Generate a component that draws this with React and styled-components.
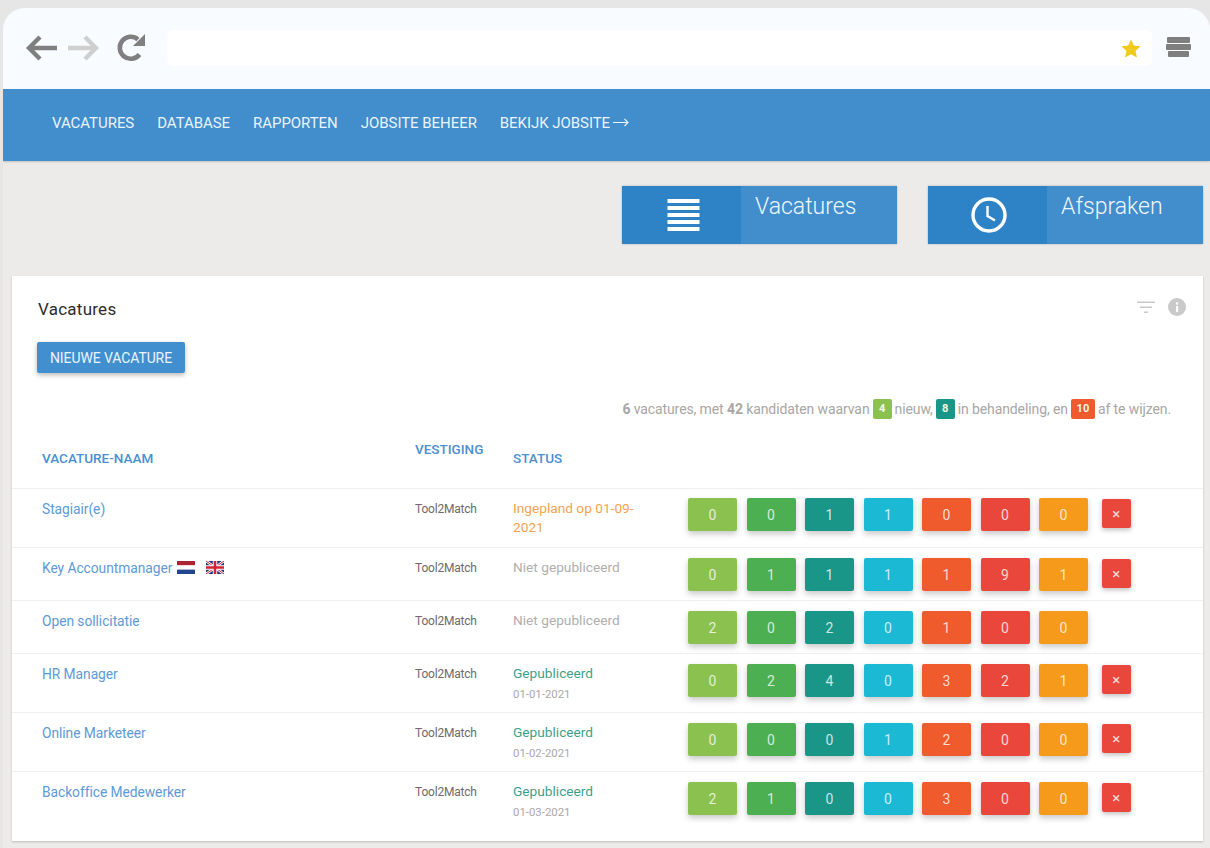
import React from "react";
import styled, { createGlobalStyle } from "styled-components";

const Global = createGlobalStyle`
  html, body { margin: 0; padding: 0; background: #e6e6e6; }
  body { font-family: Roboto, "Liberation Sans", sans-serif; overflow: hidden; }
  * { box-sizing: border-box; }
`;

const Page = styled.div`
  width: 1210px;
  height: 848px;
  padding: 8px 0 0 3px;
  overflow: hidden;
`;
const Frame = styled.div`
  height: 840px;
  background: #ecebe9;
  border-radius: 22px 22px 0 0;
  overflow: hidden;
`;
const Chrome = styled.div`
  height: 81px;
  background: #f8fbff;
  display: flex;
  align-items: center;
  padding: 0 19px 1px 23px;
`;
const NavButtons = styled.div`
  display: flex;
  align-items: center;
  gap: 9px;
  width: 141px;
  flex: none;
`;
const ReloadWrap = styled.span`
  display: flex;
  margin: -2px 0 0 8px;
`;
const UrlBar = styled.div`
  flex: 1;
  height: 36px;
  background: #fff;
  border-radius: 6px;
  display: flex;
  align-items: center;
  justify-content: flex-end;
  padding-right: 11px;
`;
const Burger = styled.div`
  width: 25px;
  margin: 0 0 2px 14px;
  display: flex;
  flex-direction: column;
  align-items: center;
  gap: 1px;
`;
const BurgerBar = styled.span`
  display: block;
  height: 6px;
  width: ${(p) => p.$w}px;
  background: #7f7f7f;
  border-radius: 1px;
`;
const Nav = styled.nav`
  height: 72px;
  background: #428dcc;
  display: flex;
  align-items: center;
  gap: 23px;
  padding: 0 0 5px 49px;
  box-shadow: 0 1px 2px rgba(0, 0, 0, 0.18);
`;
const NavItem = styled.span`
  display: inline-flex;
  align-items: center;
  gap: 3px;
  color: #e9f4fe;
  font-size: 15px;
  letter-spacing: -0.05px;
  text-transform: uppercase;
`;
const StatRow = styled.div`
  display: flex;
  justify-content: flex-end;
  gap: 31px;
  padding: 25px 7px 0 0;
`;
const Stat = styled.div`
  width: 275px;
  height: 58px;
  display: flex;
  background: #428dcc;
  box-shadow: 0 0 2px rgba(0, 0, 0, 0.25);
`;
const StatIcon = styled.div`
  width: 119px;
  padding-left: 3px;
  background: #2e83c6;
  display: flex;
  align-items: center;
  justify-content: center;
`;
const StatLabel = styled.div`
  padding: 6px 0 0 14px;
  color: #eef6fd;
  font-size: 23px;
  font-weight: 300;
  line-height: 30px;
`;
const Card = styled.section`
  margin: 32px 7px 0 9px;
  height: 565px;
  background: #fff;
  box-shadow: 0 1px 2px rgba(0, 0, 0, 0.2);
`;
const CardHead = styled.div`
  display: flex;
  justify-content: space-between;
  align-items: center;
  height: 66px;
  padding: 0 17px 0 26px;
`;
const CardTitle = styled.h2`
  margin: 0;
  font-size: 17px;
  font-weight: 400;
  letter-spacing: 0.25px;
  color: #2c2c2c;
`;
const HeadTools = styled.div`
  display: flex;
  align-items: center;
  gap: 13px;
  margin-top: -4px;
`;
const NewButton = styled.button`
  display: block;
  margin-left: 25px;
  width: 148px;
  height: 31px;
  border: 0;
  padding: 0;
  border-radius: 2px;
  background: #428fd0;
  color: #e9f4fe;
  font-family: inherit;
  font-size: 14px;
  letter-spacing: -0.1px;
  text-transform: uppercase;
  box-shadow: 0 2px 5px rgba(0, 0, 0, 0.28);
`;
const Summary = styled.p`
  margin: 26px 32px 0 0;
  height: 20px;
  line-height: 20px;
  text-align: right;
  font-size: 14px;
  letter-spacing: -0.1px;
  color: #a9a6a4;
  white-space: nowrap;
`;
const SummaryBadge = styled.span`
  display: inline-block;
  width: ${(p) => p.$w}px;
  height: 20px;
  line-height: 20px;
  text-align: center;
  margin: 0 3px;
  letter-spacing: 0;
  vertical-align: top;
  border-radius: 2px;
  background: ${(p) => p.$bg};
  color: #f2f7ea;
  font-size: 11px;
  font-weight: 700;
`;
const HeaderRow = styled.div`
  display: grid;
  grid-template-columns: 373px 98px 1fr;
  height: 69px;
  padding-left: 30px;
  color: #4a90d2;
  font-size: 13.5px;
  font-weight: 500;
  text-transform: uppercase;
`;
const HeadCell = styled.div`
  padding-top: ${(p) => p.$top}px;
  line-height: 16px;
`;
const Row = styled.div`
  display: grid;
  grid-template-columns: 373px 98px 175px 1fr;
  height: ${(p) => p.$h}px;
  padding: 11px 0 0 30px;
  border-top: 1px solid #efefef;
`;
const NameCell = styled.div`
  display: flex;
  align-items: flex-start;
  gap: 3px;
  color: #5d9ad8;
  font-size: 13.8px;
  letter-spacing: -0.05px;
  line-height: 18px;
`;
const Flag = styled.svg`
  width: 18px;
  height: 13px;
  margin: 2px 6px 0 2px;
`;
const Branch = styled.div`
  color: #6e6a68;
  font-size: 12px;
  letter-spacing: -0.2px;
  line-height: 18px;
`;
const StatusCell = styled.div`
  margin-top: -1px;
  font-size: 13.7px;
  line-height: 19px;
  white-space: pre-line;
  color: ${(p) => p.$color};
`;
const StatusDate = styled.div`
  margin-top: 2px;
  font-size: 11.4px;
  line-height: 18px;
  color: #aaa8a7;
`;
const Counts = styled.div`
  display: flex;
  align-items: flex-start;
  gap: 9.5px;
  margin-top: ${(p) => (p.$first ? -2 : -1)}px;
`;
const Count = styled.div`
  width: 49px;
  height: 33px;
  display: flex;
  align-items: center;
  justify-content: center;
  border-radius: 2px;
  background: ${(p) => p.$bg};
  color: rgba(255, 255, 255, 0.78);
  font-size: 14px;
  box-shadow: 0 3px 6px rgba(0, 0, 0, 0.22);
`;
const Remove = styled.button`
  width: 28.5px;
  height: 29px;
  margin: 1px 0 0 4.5px;
  border: 0;
  padding: 0;
  display: flex;
  align-items: center;
  justify-content: center;
  border-radius: 2px;
  background: #e9473b;
  color: #f6dcda;
  font-family: inherit;
  font-size: 15px;
  box-shadow: 0 2px 5px rgba(0, 0, 0, 0.25);
`;

const Arrow = ({ flip, color }) => (
  <svg width="32" height="28" viewBox="0 0 32 28" style={flip ? { transform: "scaleX(-1)" } : undefined}>
    <path d="M14 3 L3 14 L14 25 M3 14 H31" fill="none" stroke={color} strokeWidth="4.4" />
  </svg>
);
const LinkArrow = () => (
  <svg width="16" height="9" viewBox="0 0 16 9">
    <path d="M0 4.5 H15 M11.5 1 L15 4.5 L11.5 8" fill="none" stroke="#e9f4fe" strokeWidth="1.1" />
  </svg>
);
const Reload = () => (
  <svg width="30" height="30" viewBox="0 0 30 30">
    <path d="M23.5 22.5 A11 11 0 1 1 22 7.5" fill="none" stroke="#7f7f7f" strokeWidth="4.6" />
    <path d="M29 2 V14 H17 Z" fill="#7f7f7f" />
  </svg>
);
const Star = () => (
  <svg width="20" height="19" viewBox="0 0 24 23">
    <path d="M12 0.5 L15.4 8 L23.5 8.9 L17.5 14.4 L19.2 22.5 L12 18.4 L4.8 22.5 L6.5 14.4 L0.5 8.9 L8.6 8 Z" fill="#f0c91f" />
  </svg>
);
const ListIcon = () => (
  <svg width="33" height="34" viewBox="0 0 33 34">
    {[0, 7, 14, 21, 28].map((y) => (
      <rect key={y} x="0.5" y={y + 1} width="32" height="4" fill="#fff" />
    ))}
  </svg>
);
const ClockIcon = () => (
  <svg width="38" height="38" viewBox="0 0 38 38">
    <circle cx="19" cy="19" r="16" fill="none" stroke="#fff" strokeWidth="3.4" />
    <path d="M17.5 10 V20 L25 24.5" fill="none" stroke="#fff" strokeWidth="2.4" />
  </svg>
);
const FilterIcon = () => (
  <svg width="18" height="13" viewBox="0 0 18 13">
    <path d="M0 0.5 H18 V2 H0 Z M3 5.5 H15 V7 H3 Z M7 10.5 H11 V12 H7 Z" fill="#c9c9c9" />
  </svg>
);
const InfoIcon = () => (
  <svg width="18" height="18" viewBox="0 0 18 18">
    <circle cx="9" cy="9" r="9" fill="#c9c9c9" />
    <rect x="8" y="8" width="2.2" height="6" fill="#fff" />
    <rect x="8" y="4.4" width="2.2" height="2.2" fill="#fff" />
  </svg>
);
const DutchFlag = () => (
  <Flag viewBox="0 0 18 13">
    <rect width="18" height="4.4" fill="#ad2333" />
    <rect y="4.4" width="18" height="4.2" fill="#fff" />
    <rect y="8.6" width="18" height="4.4" fill="#21468b" />
  </Flag>
);
const UkFlag = () => (
  <Flag viewBox="0 0 18 13">
    <rect width="18" height="13" fill="#26357a" />
    <path d="M0 0 L18 13 M18 0 L0 13" stroke="#fff" strokeWidth="2.6" />
    <path d="M0 0 L18 13 M18 0 L0 13" stroke="#cf2436" strokeWidth="1" />
    <path d="M9 0 V13 M0 6.5 H18" stroke="#fff" strokeWidth="4.4" />
    <path d="M9 0 V13 M0 6.5 H18" stroke="#cf2436" strokeWidth="2.6" />
  </Flag>
);

const COLORS = ["#8bc14e", "#4caf52", "#1a9688", "#1cb9d4", "#ef5b2d", "#e9473b", "#f59a1b"];
const PUBLISHED = "#3d9f8b";
const ROWS = [
  { h: 59, name: "Stagiair(e)", status: "Ingepland op 01-09-\n2021", color: "#f7a24e", counts: [0, 0, 1, 1, 0, 0, 0], remove: true },
  { h: 53, name: "Key Accountmanager", flags: true, status: "Niet gepubliceerd", color: "#b0aeac", counts: [0, 1, 1, 1, 1, 9, 1], remove: true },
  { h: 53, name: "Open sollicitatie", status: "Niet gepubliceerd", color: "#b0aeac", counts: [2, 0, 2, 0, 1, 0, 0] },
  { h: 59, name: "HR Manager", status: "Gepubliceerd", date: "01-01-2021", color: PUBLISHED, counts: [0, 2, 4, 0, 3, 2, 1], remove: true },
  { h: 59, name: "Online Marketeer", status: "Gepubliceerd", date: "01-02-2021", color: PUBLISHED, counts: [0, 0, 0, 1, 2, 0, 0], remove: true },
  { h: 70, name: "Backoffice Medewerker", status: "Gepubliceerd", date: "01-03-2021", color: PUBLISHED, counts: [2, 1, 0, 0, 3, 0, 0], remove: true },
];
const NAV = ["Vacatures", "Database", "Rapporten", "Jobsite beheer"];

export default function App() {
  return (
    <Page>
      <Global />
      <Frame>
        <Chrome>
          <NavButtons>
            <Arrow color="#7f7f7f" />
            <Arrow flip color="#cfcfcf" />
            <ReloadWrap>
              <Reload />
            </ReloadWrap>
          </NavButtons>
          <UrlBar>
            <Star />
          </UrlBar>
          <Burger>
            <BurgerBar $w={23} />
            <BurgerBar $w={25} />
            <BurgerBar $w={21} />
          </Burger>
        </Chrome>
        <Nav>
          {NAV.map((n) => (
            <NavItem key={n}>{n}</NavItem>
          ))}
          <NavItem>
            Bekijk jobsite <LinkArrow />
          </NavItem>
        </Nav>
        <StatRow>
          <Stat>
            <StatIcon>
              <ListIcon />
            </StatIcon>
            <StatLabel>Vacatures</StatLabel>
          </Stat>
          <Stat>
            <StatIcon>
              <ClockIcon />
            </StatIcon>
            <StatLabel>Afspraken</StatLabel>
          </Stat>
        </StatRow>
        <Card>
          <CardHead>
            <CardTitle>Vacatures</CardTitle>
            <HeadTools>
              <FilterIcon />
              <InfoIcon />
            </HeadTools>
          </CardHead>
          <NewButton>Nieuwe vacature</NewButton>
          <Summary>
            <b>6</b> vacatures, met <b>42</b> kandidaten waarvan
            <SummaryBadge $bg="#8bc14e" $w={19}>4</SummaryBadge>
            nieuw,
            <SummaryBadge $bg="#1a9688" $w={19}>8</SummaryBadge>
            in behandeling, en
            <SummaryBadge $bg="#ef5b2d" $w={24}>10</SummaryBadge>
            af te wijzen.
          </Summary>
          <HeaderRow>
            <HeadCell $top={31}>Vacature-naam</HeadCell>
            <HeadCell $top={22}>Vestiging</HeadCell>
            <HeadCell $top={31}>Status</HeadCell>
          </HeaderRow>
          {ROWS.map((r, idx) => (
            <Row key={r.name} $h={r.h}>
              <NameCell>
                <span>{r.name}</span>
                {r.flags && <DutchFlag />}
                {r.flags && <UkFlag />}
              </NameCell>
              <Branch>Tool2Match</Branch>
              <StatusCell $color={r.color}>
                {r.status}
                {r.date && <StatusDate>{r.date}</StatusDate>}
              </StatusCell>
              <Counts $first={idx === 0}>
                {r.counts.map((c, i) => (
                  <Count key={i} $bg={COLORS[i]}>{c}</Count>
                ))}
                {r.remove && <Remove>×</Remove>}
              </Counts>
            </Row>
          ))}
        </Card>
      </Frame>
    </Page>
  );
}
